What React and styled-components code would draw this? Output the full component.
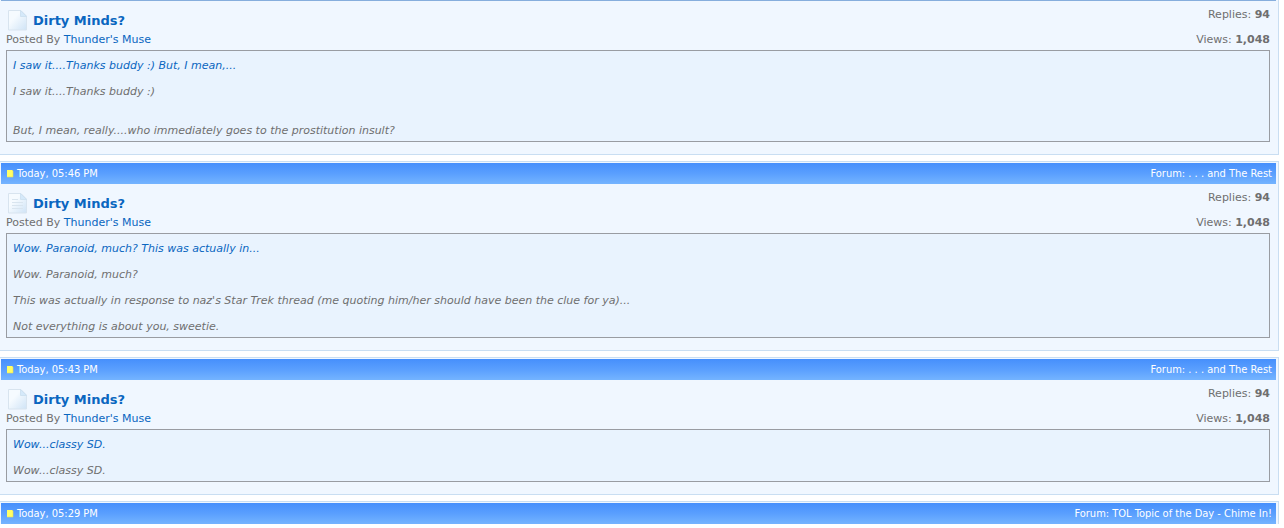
import React from "react";
import styled, { createGlobalStyle } from "styled-components";

const GlobalStyle = createGlobalStyle`
  html, body { margin: 0; background: #fff; }
  body {
    font: 11px/13px Verdana, "DejaVu Sans", sans-serif;
    color: #6f6f6f;
    overflow-x: hidden;
  }
`;

const Feed = styled.main`
  display: flex;
  flex-direction: column;
  gap: 6px;
  margin-right: 5px;
`;

const Post = styled.article`
  background: #f0f7ff;
  border: solid #c9def2;
  border-width: ${(p) => (p.$continued ? "0 1px 1px 0" : "1px 1px 1px 0")};
  padding: ${(p) => (p.$continued ? "0 2px 0 1px" : "1px 2px 0 1px")};
`;

const LatestPost = styled(Post)`
  border-bottom: 0;
`;

const Bar = styled.header`
  display: flex;
  align-items: center;
  justify-content: space-between;
  height: 21px;
  padding: 0 4px 0 5px;
  background: linear-gradient(#468ffc, #5a9ffe 50%, #74b4ff);
  color: #fff;
  font: 11px/21px Tahoma, "DejaVu Sans Condensed", sans-serif;
`;

const BarEdge = styled.div`
  height: 1px;
  background: #86aedd;
`;

const Stamp = styled.time`
  display: flex;
  align-items: center;
  gap: 3px;
`;

const Body = styled.div`
  padding: 0 6px 12px 5px;
`;

const Summary = styled.div`
  display: flex;
  justify-content: space-between;
  height: 49px;
  line-height: 16px;
`;

const Heading = styled.div`
  padding-top: 9px;
`;

const TitleRow = styled.div`
  display: flex;
  align-items: center;
  gap: 5px;
  height: 22px;
  padding-left: 2px;
`;

const Title = styled.h2`
  margin: 0;
  font-size: 13px;
  line-height: 20px;
`;

const Link = styled.a`
  color: #0a66c0;
  text-decoration: none;
`;

const Stats = styled.div`
  display: flex;
  flex-direction: column;
  gap: 9px;
  padding-top: 6px;
  text-align: right;
`;

const Quote = styled.blockquote`
  display: flex;
  flex-direction: column;
  gap: 13px;
  margin: 0;
  padding: 8px 6px 4px;
  border: 1px solid #999ca2;
  background: #e9f3fe;
  font-style: italic;
`;

const Line = styled.p`
  margin: 0;
  padding-top: ${(p) => (p.$spaced ? "13px" : "0")};
`;

const Dot = () => (
  <svg width="8" height="9" viewBox="0 0 8 9" aria-hidden="true">
    <path d="M1 1h5l1 1v6H1z" fill="#ffff66" />
    <path d="M6 1l1 1v6H1" fill="none" stroke="#e9dc58" strokeWidth=".6" />
  </svg>
);

const Page = ({ id, lined }) => (
  <svg width="20" height="22" viewBox="0 0 20 22" aria-hidden="true">
    <defs>
      <linearGradient id={id} x1="0" y1="0" x2="1" y2="1">
        <stop offset="0.35" stopColor="#f6fbff" />
        <stop offset="1" stopColor="#cfe3f6" />
      </linearGradient>
    </defs>
    <path d="M.5 .5h12.5l5.5 5.5v14H.5z" fill={`url(#${id})`} stroke="#d8e4ef" />
    <path d="M12.5 .5v6h6z" fill="#d5e9fa" stroke="#cadeef" strokeWidth=".8" />
    {lined && (
      <path d="M4 6.5h6M4 9.5h11M4 12.5h11M4 15.5h11" stroke="#d9e5ef" strokeWidth="1" />
    )}
  </svg>
);

const REST = "Forum: . . . and The Rest";

const posts = [
  {
    id: "a",
    excerpt: "I saw it....Thanks buddy :) But, I mean,...",
    lines: [
      { text: "I saw it....Thanks buddy :)" },
      { text: "But, I mean, really....who immediately goes to the prostitution insult?", spaced: true },
    ],
  },
  {
    id: "b",
    time: "Today, 05:46 PM",
    forum: REST,
    lined: true,
    excerpt: "Wow. Paranoid, much? This was actually in...",
    lines: [
      { text: "Wow. Paranoid, much?" },
      { text: "This was actually in response to naz's Star Trek thread (me quoting him/her should have been the clue for ya)..." },
      { text: "Not everything is about you, sweetie." },
    ],
  },
  {
    id: "c",
    time: "Today, 05:43 PM",
    forum: REST,
    excerpt: "Wow...classy SD.",
    lines: [{ text: "Wow...classy SD." }],
  },
];

const latest = { time: "Today, 05:29 PM", forum: "Forum: TOL Topic of the Day - Chime In!" };

function PostBar({ time, forum }) {
  return (
    <Bar>
      <Stamp><Dot />{time}</Stamp>
      <span>{forum}</span>
    </Bar>
  );
}

function PostCard({ post }) {
  return (
    <Post $continued={!post.time}>
      {post.time ? <PostBar time={post.time} forum={post.forum} /> : <BarEdge />}
      <Body>
        <Summary>
          <Heading>
            <TitleRow>
              <Page id={`page-${post.id}`} lined={post.lined} />
              <Title><Link href="#thread">Dirty Minds?</Link></Title>
            </TitleRow>
            <div>Posted By <Link href="#member">Thunder's Muse</Link></div>
          </Heading>
          <Stats>
            <span>Replies: <b>94</b></span>
            <span>Views: <b>1,048</b></span>
          </Stats>
        </Summary>
        <Quote>
          <Line><Link href="#post">{post.excerpt}</Link></Line>
          {post.lines.map((line) => (
            <Line key={line.text} $spaced={line.spaced}>{line.text}</Line>
          ))}
        </Quote>
      </Body>
    </Post>
  );
}

export default function App() {
  return (
    <>
      <GlobalStyle />
      <Feed>
        {posts.map((post) => <PostCard key={post.id} post={post} />)}
        <LatestPost>
          <PostBar time={latest.time} forum={latest.forum} />
        </LatestPost>
      </Feed>
    </>
  );
}
